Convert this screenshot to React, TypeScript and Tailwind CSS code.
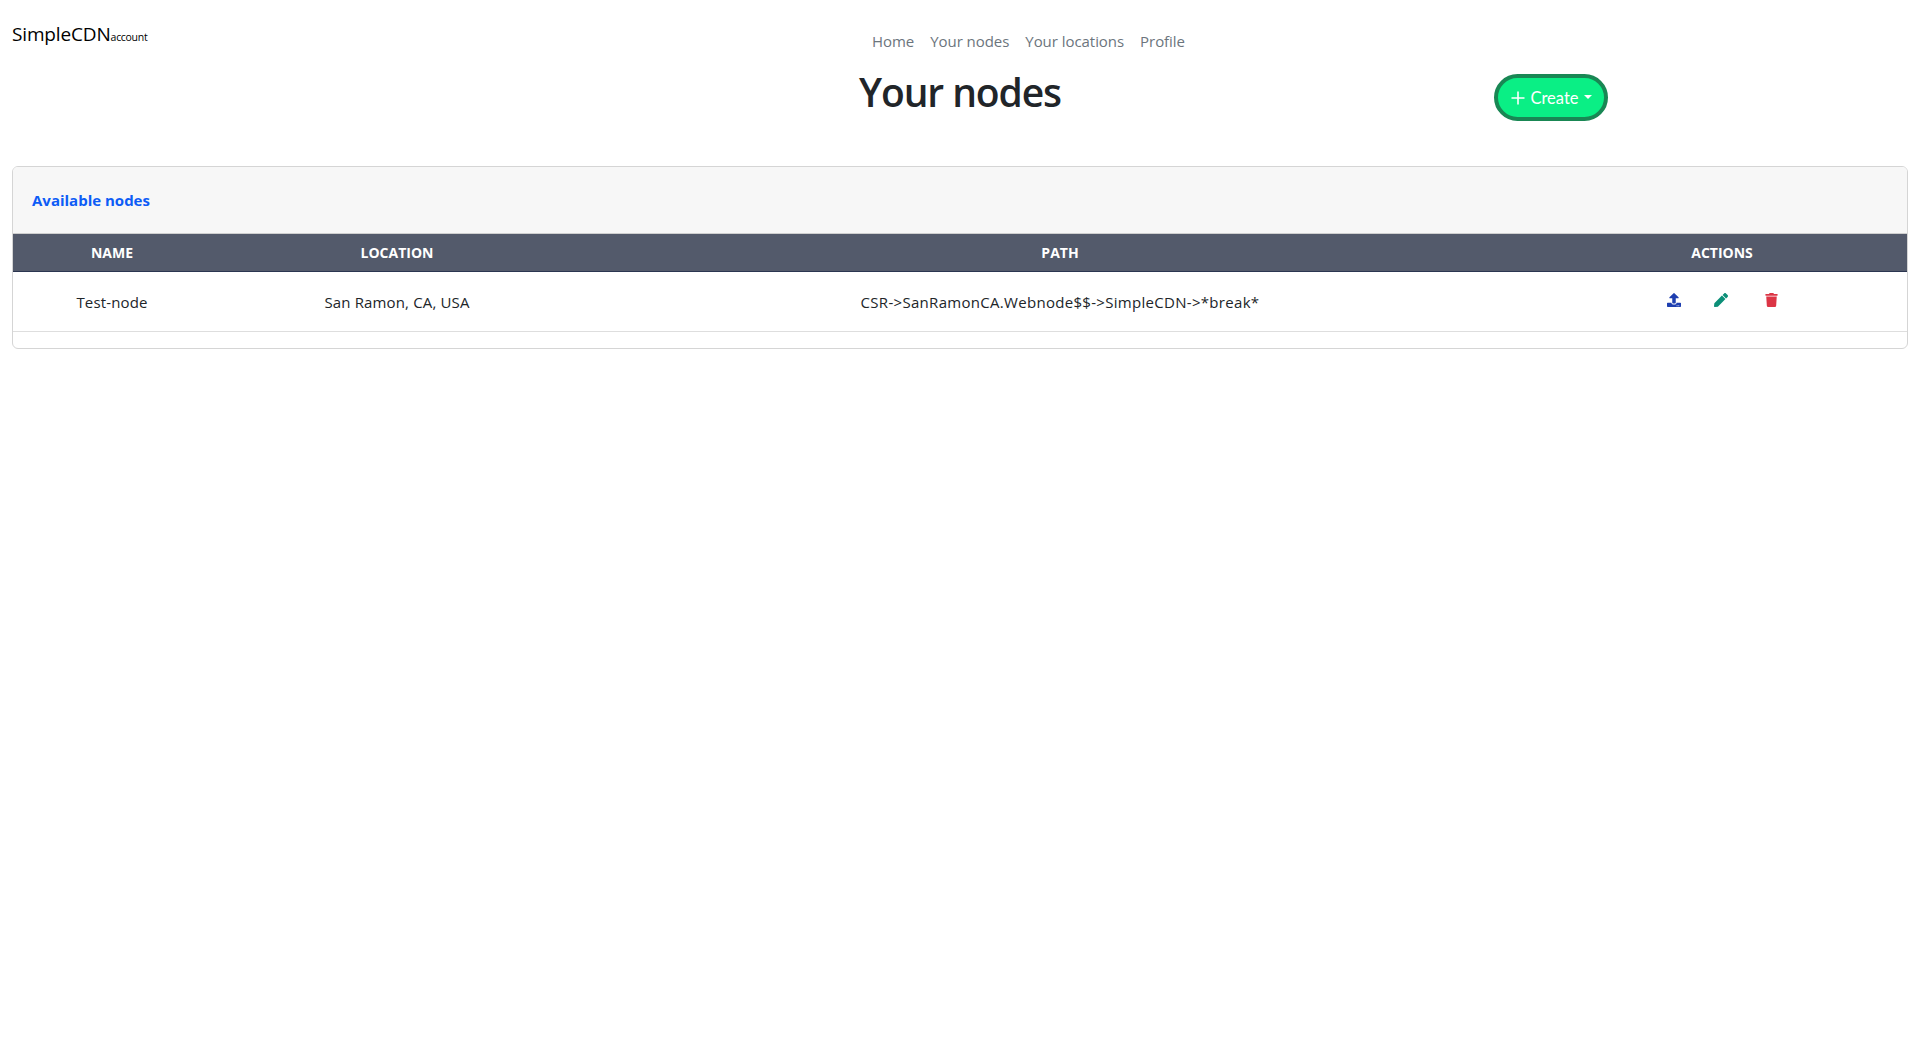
import { FaPen, FaTrash, FaUpload } from "react-icons/fa";

const navLinks = ["Home", "Your nodes", "Your locations", "Profile"];

export default function App() {
  return (
    <div className="min-h-[1049px] bg-white font-['Open_Sans','Noto_Sans',sans-serif] text-[#212529]">
      {/* top bar */}
      <header className="flex h-[62px] items-start pl-3">
        <a className="mt-[22px] flex w-[860px] items-baseline text-[19px] leading-[24px] tracking-[-0.15px] text-black">
          SimpleCDN<span className="text-[10.5px] tracking-[-0.3px]">account</span>
        </a>
        <nav className="mt-[31px] flex gap-[16px] text-[15px] leading-[20px] tracking-[-0.05px] text-[#6c757d]">
          {navLinks.map((link) => (
            <a key={link}>{link}</a>
          ))}
        </nav>
      </header>

      {/* title row */}
      <div className="grid h-[104px] grid-cols-[1fr_auto_1fr] items-start">
        <div />
        <h1 className="mt-[6px] text-[39px] font-semibold leading-[48px] tracking-[-1.1px] text-[#212529]">Your nodes</h1>
        <div className="flex justify-end pr-[312px]">
          <button className="mt-[12px] flex h-[47px] w-[114px] items-center justify-center gap-[5px] rounded-full border-[4px] border-[#198754] bg-[#0aef85] pl-[1px] pt-[1px] font-['Lato',sans-serif] text-[16.5px] text-white">
            <svg viewBox="0 0 14 14" className="h-[14px] w-[14px]" fill="none" stroke="currentColor" strokeWidth="1.6">
              <path d="M7 0.5v13M0.5 7h13" />
            </svg>
            Create
            <span className="mb-[3px] h-0 w-0 border-x-[4px] border-t-[4px] border-x-transparent border-t-white" />
          </button>
        </div>
      </div>

      {/* nodes card */}
      <section className="mx-3 overflow-hidden rounded-[6px] border border-[#d5d5d5]">
        <div className="flex h-[67px] items-center border-b border-[#cfcfcf] bg-[#f7f7f7] px-[19px] text-[15px] font-bold text-[#0d5cf6]">
          Available nodes
        </div>
        <table className="mb-[16px] w-full table-fixed border-collapse text-center">
          <thead>
            <tr className="h-[37px] border-b border-[#2b3550] bg-[#535a6b] text-[14px] font-bold uppercase text-white">
              <th className="w-[198px] font-bold">Name</th>
              <th className="w-[372px] font-bold">Location</th>
              <th className="font-bold">Path</th>
              <th className="w-[370px] font-bold">Actions</th>
            </tr>
          </thead>
          <tbody>
            <tr className="h-[60px] border-b border-[#dedede] text-[15px] tracking-[0.15px]">
              <td className="pt-[2px]">Test-node</td>
              <td className="pt-[2px]">San Ramon, CA, USA</td>
              <td className="pt-[2px] tracking-[0.3px]">{"CSR->SanRamonCA.Webnode$$->SimpleCDN->*break*"}</td>
              <td>
                <div className="flex -translate-y-[1px] items-center justify-center gap-[33px]">
                  <FaUpload className="h-[14px] w-[14px] text-[#1e3fb0]" />
                  <FaPen className="h-[14px] w-[14px] text-[#0c8f78]" />
                  <FaTrash className="ml-[4px] h-[14px] w-[13px] text-[#dc3545]" />
                </div>
              </td>
            </tr>
          </tbody>
        </table>
      </section>
    </div>
  );
}
